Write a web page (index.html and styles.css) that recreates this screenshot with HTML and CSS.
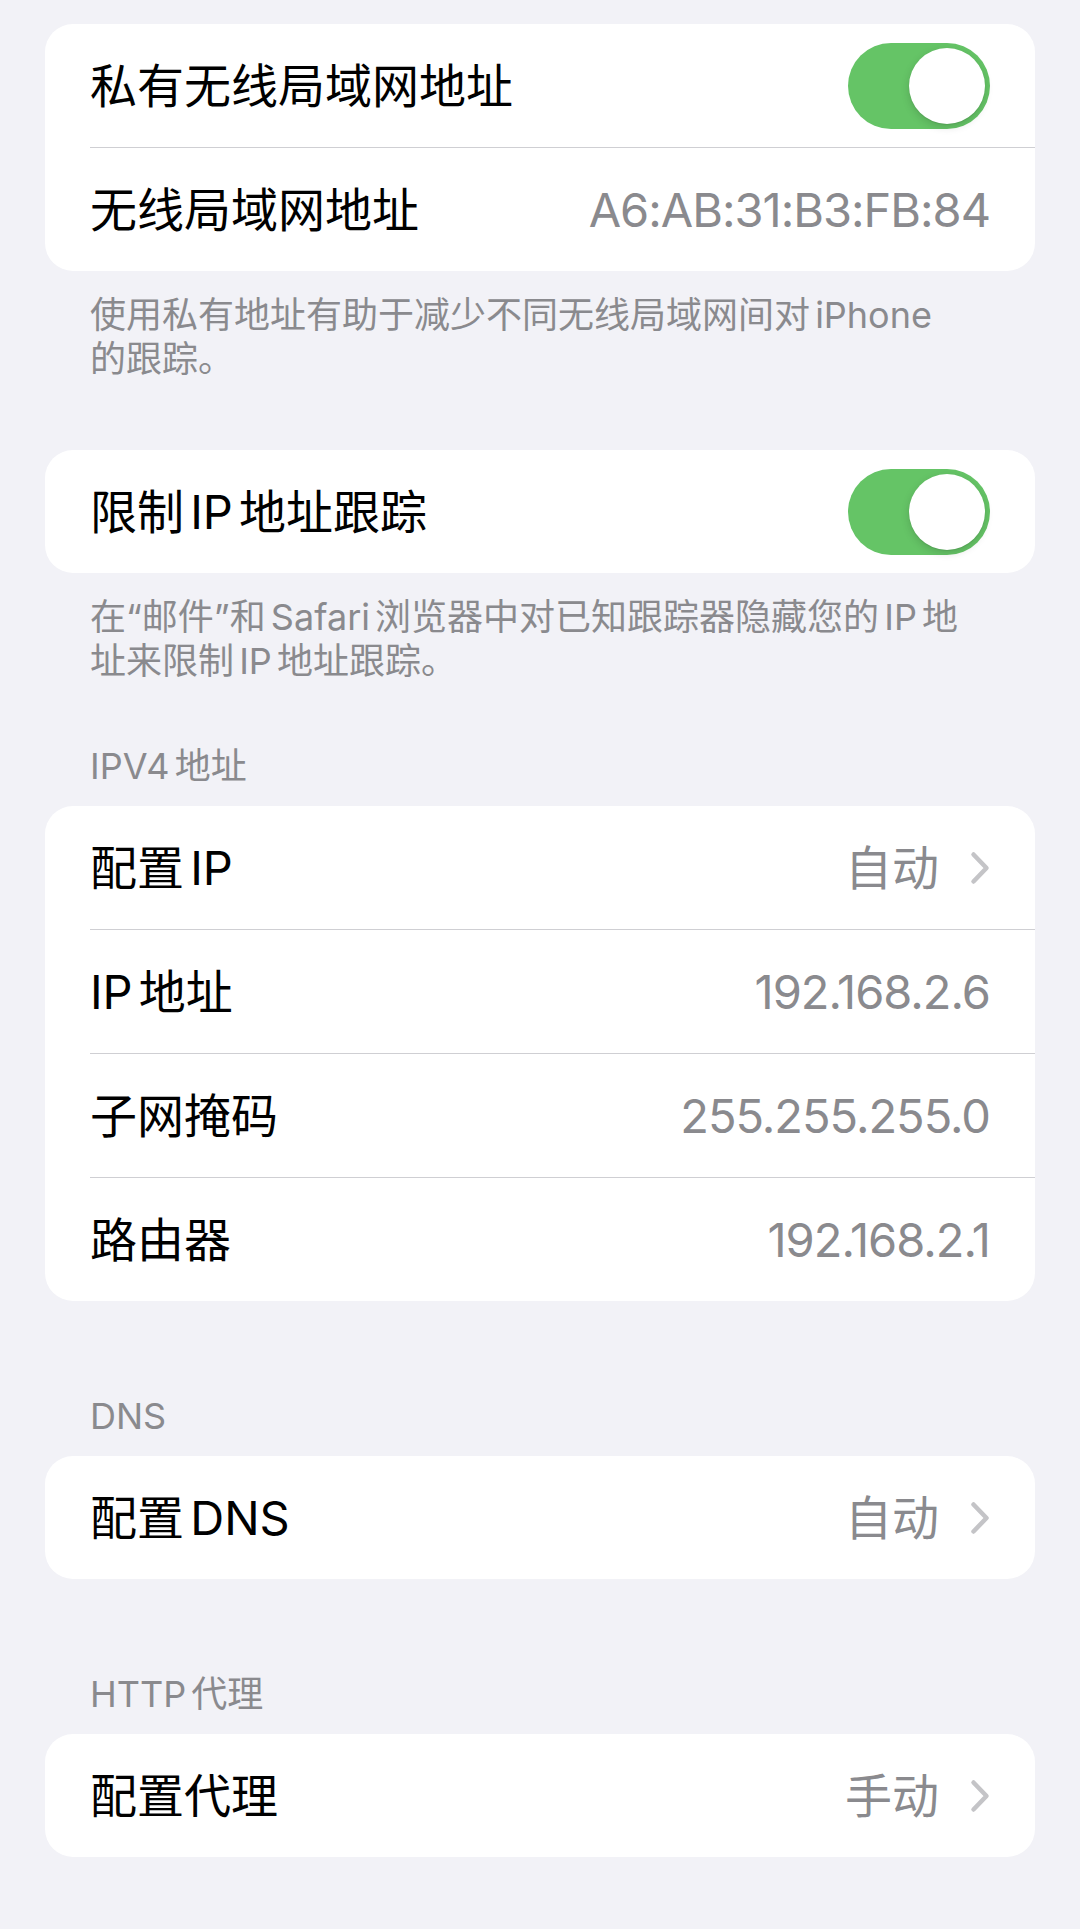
FILE: index.html
```html
<!DOCTYPE html>
<html lang="zh-CN">
<head>
<meta charset="utf-8">
<title>无线局域网设置</title>
<link rel="stylesheet" href="styles.css">
</head>
<body>
<main class="page">

  <section class="group">
    <div class="card">
      <div class="row">
        <span class="label">私有无线局域网地址</span>
        <span class="toggle"><span class="knob"></span></span>
      </div>
      <div class="row">
        <span class="label">无线局域网地址</span>
        <span class="value">A6:AB:31:B3:FB:84</span>
      </div>
    </div>
    <p class="note">使用私有地址有助于减少不同无线局域网间对 iPhone<br>的跟踪。</p>
  </section>

  <section class="group group--after-note">
    <div class="card">
      <div class="row">
        <span class="label">限制 IP 地址跟踪</span>
        <span class="toggle"><span class="knob"></span></span>
      </div>
    </div>
    <p class="note">在“邮件”和 Safari 浏览器中对已知跟踪器隐藏您的 IP 地<br>址来限制 IP 地址跟踪。</p>
  </section>

  <section class="group group--after-note-header">
    <h2 class="header">IPV4 地址</h2>
    <div class="card">
      <div class="row">
        <span class="label">配置 IP</span>
        <span class="detail">
          <span class="value">自动</span>
          <svg class="chevron" viewBox="0 0 20 34" aria-hidden="true"><path d="M3.5 3.5 L16.5 17 L3.5 30.5"/></svg>
        </span>
      </div>
      <div class="row">
        <span class="label">IP 地址</span>
        <span class="value">192.168.2.6</span>
      </div>
      <div class="row">
        <span class="label">子网掩码</span>
        <span class="value">255.255.255.0</span>
      </div>
      <div class="row">
        <span class="label">路由器</span>
        <span class="value">192.168.2.1</span>
      </div>
    </div>
  </section>

  <section class="group group--header">
    <h2 class="header">DNS</h2>
    <div class="card">
      <div class="row">
        <span class="label">配置 DNS</span>
        <span class="detail">
          <span class="value">自动</span>
          <svg class="chevron" viewBox="0 0 20 34" aria-hidden="true"><path d="M3.5 3.5 L16.5 17 L3.5 30.5"/></svg>
        </span>
      </div>
    </div>
  </section>

  <section class="group group--header">
    <h2 class="header">HTTP 代理</h2>
    <div class="card">
      <div class="row">
        <span class="label">配置代理</span>
        <span class="detail">
          <span class="value">手动</span>
          <svg class="chevron" viewBox="0 0 20 34" aria-hidden="true"><path d="M3.5 3.5 L16.5 17 L3.5 30.5"/></svg>
        </span>
      </div>
    </div>
  </section>

</main>
</body>
</html>
```
FILE: styles.css
```css
html, body {
  margin: 0;
  padding: 0;
}

body {
  background: #f2f2f7;
  font-family: Inter, "Noto Sans CJK SC", sans-serif;
  color: #000;
}

.page {
  padding: 24px 45px 70px;
}

/* section spacing */
.group--after-note {
  margin-top: 69px;
}

.group--after-note-header {
  margin-top: 61px;
}

.group--header {
  margin-top: 93px;
}

/* grouped list card */
.card {
  background: #fff;
  border-radius: 28px;
  overflow: hidden;
}

.row {
  display: flex;
  align-items: center;
  justify-content: space-between;
  height: 123px;
  margin-left: 45px;
  padding-right: 45px;
}

.row + .row {
  border-top: 1px solid #cfcfd3;
}

.label {
  font-size: 47px;
  line-height: 1;
  word-spacing: -7px;
  color: #000;
}

.value {
  font-size: 47px;
  line-height: 1;
  letter-spacing: -1px;
  color: #8a8a8e;
}

.detail {
  display: flex;
  align-items: center;
  gap: 31px;
}

.detail .value {
  letter-spacing: 0;
}

.chevron {
  width: 20px;
  height: 34px;
  fill: none;
  stroke: #c4c4c7;
  stroke-width: 4.5;
  stroke-linecap: round;
  stroke-linejoin: round;
}

/* switch, on state */
.toggle {
  display: flex;
  justify-content: flex-end;
  align-items: center;
  box-sizing: border-box;
  width: 142px;
  height: 86px;
  padding: 5px;
  border-radius: 43px;
  background: #65c466;
}

.knob {
  width: 76px;
  height: 76px;
  border-radius: 50%;
  background: #fff;
  box-shadow: 0 3px 8px rgba(0, 0, 0, 0.15), 0 1px 1px rgba(0, 0, 0, 0.08);
}

/* section footer and header text */
.note {
  margin: 0;
  padding: 22px 0 0 45px;
  font-size: 36px;
  line-height: 44px;
  word-spacing: -5px;
  color: #8a8a8e;
}

.header {
  margin: 0 0 18px;
  padding-left: 45px;
  font-size: 36px;
  line-height: 44px;
  font-weight: 400;
  word-spacing: -5px;
  color: #8a8a8e;
}
```
